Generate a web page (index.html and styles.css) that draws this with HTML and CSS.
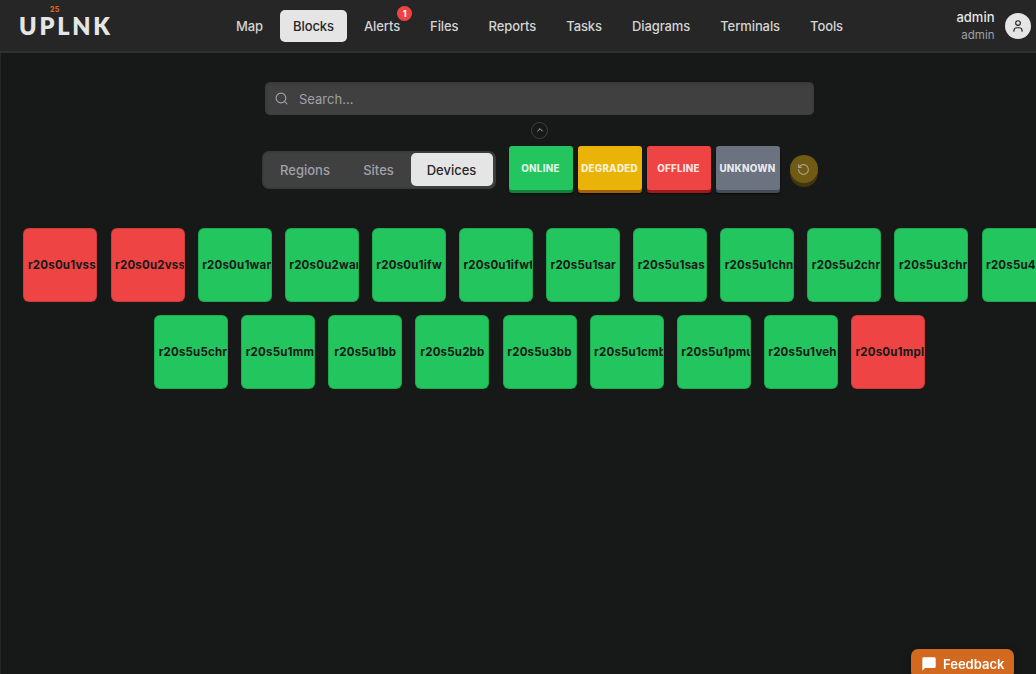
FILE: index.html
```html
<!DOCTYPE html>
<html lang="en">
<head>
    <meta charset="UTF-8">
    <meta name="viewport" content="width=device-width, initial-scale=1.0">
    <title>UPLNK - Blocks</title>
    <link rel="stylesheet" href="styles.css">
</head>
<body>

    <header class="topbar">
        <div class="logo">UPLNK<span class="logo-version">25</span></div>
        <nav class="nav">
            <a class="nav-link">Map</a>
            <a class="nav-link active">Blocks</a>
            <a class="nav-link">Alerts<span class="alert-count">1</span></a>
            <a class="nav-link">Files</a>
            <a class="nav-link">Reports</a>
            <a class="nav-link">Tasks</a>
            <a class="nav-link">Diagrams</a>
            <a class="nav-link">Terminals</a>
            <a class="nav-link">Tools</a>
        </nav>
        <div class="user">
            <div class="user-text">
                <div class="user-name">admin</div>
                <div class="user-role">admin</div>
            </div>
            <div class="avatar">
                <svg width="14" height="14" viewBox="0 0 24 24" fill="none" stroke="#262626" stroke-width="2" stroke-linecap="round" stroke-linejoin="round">
                    <circle cx="12" cy="7" r="4"/>
                    <path d="M19 21v-1a5 5 0 0 0-5-5h-4a5 5 0 0 0-5 5v1"/>
                </svg>
            </div>
        </div>
    </header>

    <main class="content">
        <div class="search">
            <svg width="13" height="13" viewBox="0 0 24 24" fill="none" stroke="#a1a1aa" stroke-width="2" stroke-linecap="round">
                <circle cx="11" cy="11" r="9"/>
                <path d="M22 22l-4.5-4.5"/>
            </svg>
            <span>Search...</span>
        </div>

        <div class="collapse">
            <svg width="8" height="8" viewBox="0 0 24 24" fill="none" stroke="#b4b4b4" stroke-width="3" stroke-linecap="round" stroke-linejoin="round">
                <path d="M5 15l7-7 7 7"/>
            </svg>
        </div>

        <div class="filters">
            <div class="tabs">
                <div class="tab regions">Regions</div>
                <div class="tab sites">Sites</div>
                <div class="tab devices active">Devices</div>
            </div>
            <div class="statuses">
                <div class="status online">ONLINE</div>
                <div class="status degraded">DEGRADED</div>
                <div class="status offline">OFFLINE</div>
                <div class="status unknown">UNKNOWN</div>
            </div>
            <div class="reset">
                <svg width="13" height="13" viewBox="0 0 24 24" fill="none" stroke="#aaa38e" stroke-width="2" stroke-linecap="round" stroke-linejoin="round">
                    <path d="M3 12a9 9 0 1 0 9-9 9.75 9.75 0 0 0-6.74 2.74L3 8"/>
                    <path d="M3 3v5h5"/>
                </svg>
            </div>
        </div>

        <div class="blocks">
            <div class="block-row">
                <div class="block down"><span>r20s0u1vss</span></div>
                <div class="block down"><span>r20s0u2vss</span></div>
                <div class="block"><span>r20s0u1wan</span></div>
                <div class="block"><span>r20s0u2wan</span></div>
                <div class="block"><span>r20s0u1ifw</span></div>
                <div class="block"><span>r20s0u1ifwt</span></div>
                <div class="block"><span>r20s5u1sar</span></div>
                <div class="block"><span>r20s5u1sas</span></div>
                <div class="block"><span>r20s5u1chn</span></div>
                <div class="block"><span>r20s5u2chr</span></div>
                <div class="block"><span>r20s5u3chr</span></div>
                <div class="block"><span>r20s5u4chr</span></div>
            </div>
            <div class="block-row">
                <div class="block"><span>r20s5u5chr</span></div>
                <div class="block"><span>r20s5u1mm</span></div>
                <div class="block"><span>r20s5u1bb</span></div>
                <div class="block"><span>r20s5u2bb</span></div>
                <div class="block"><span>r20s5u3bb</span></div>
                <div class="block"><span>r20s5u1cmb</span></div>
                <div class="block"><span>r20s5u1pmu</span></div>
                <div class="block"><span>r20s5u1veh</span></div>
                <div class="block down"><span>r20s0u1mpl</span></div>
            </div>
        </div>
    </main>

    <div class="feedback">
        <svg width="16" height="16" viewBox="0 0 24 24" fill="#fff">
            <path d="M20 2H4a2 2 0 0 0-2 2v18l4-4h14a2 2 0 0 0 2-2V4a2 2 0 0 0-2-2z"/>
        </svg>
        <span>Feedback</span>
    </div>

</body>
</html>
```

FILE: styles.css
```css
* {
    box-sizing: border-box;
}

body {
    margin: 0;
    height: 674px;
    overflow: hidden;
    background-color: #171918;
    font-family: Inter, sans-serif;
    box-shadow: inset 1px 0 0 #242625;
}

/* Top bar */
.topbar {
    display: flex;
    height: 53px;
    padding-left: 19px;
    background: #262626;
    border-bottom: 2px solid #303030;
}

.logo {
    position: relative;
    width: 204px;
    padding-top: 15px;
    font-family: Lato, sans-serif;
    font-size: 23.5px;
    font-weight: 800;
    line-height: 22px;
    letter-spacing: 2.8px;
    color: #e5e5e5;
}

.logo-version {
    position: absolute;
    left: 31px;
    top: 5px;
    font-family: Inter, sans-serif;
    font-size: 7px;
    font-weight: 800;
    line-height: 9px;
    letter-spacing: 0.4px;
    color: #d2691e;
}

.nav {
    display: flex;
    gap: 4px;
    padding-top: 10px;
}

.nav-link {
    position: relative;
    height: 32px;
    padding: 0 13px;
    border-radius: 5px;
    font-size: 13px;
    font-weight: 500;
    line-height: 32px;
    letter-spacing: -0.09px;
    color: #d4d4d4;
}

.nav-link.active {
    background: #e5e5e5;
    color: #262626;
}

.alert-count {
    position: absolute;
    top: -4px;
    right: 1px;
    width: 15px;
    height: 15px;
    border-radius: 50%;
    background: #ef4444;
    color: #fff;
    font-size: 9px;
    font-weight: 700;
    line-height: 15px;
    text-align: center;
}

.user {
    display: flex;
    gap: 10px;
    margin-left: auto;
    padding: 9px 5.5px 0 0;
}

.user-text {
    text-align: right;
}

.user-name {
    font-size: 13px;
    font-weight: 500;
    line-height: 17px;
    color: #e5e5e5;
}

.user-role {
    font-size: 11.5px;
    line-height: 19px;
    color: #a1a1a1;
}

.avatar {
    display: flex;
    align-items: center;
    justify-content: center;
    width: 26px;
    height: 26px;
    margin-top: 4px;
    border-radius: 50%;
    background: #e5e5e5;
}

/* Page content */
.content {
    display: flex;
    flex-direction: column;
    align-items: center;
    width: 1079px;
    padding-top: 29px;
}

.search {
    display: flex;
    align-items: center;
    gap: 11px;
    width: 549px;
    height: 33px;
    padding-left: 10px;
    border-radius: 5px;
    background: #404040;
    box-shadow: inset 0 1px 3px rgba(0, 0, 0, 0.2);
    font-size: 13px;
    color: #a1a1aa;
}

.collapse {
    display: flex;
    align-items: center;
    justify-content: center;
    width: 17px;
    height: 17px;
    margin-top: 6.5px;
    border: 1px solid #404040;
    border-radius: 50%;
}

.filters {
    display: flex;
    margin-top: 7.5px;
}

.tabs {
    display: flex;
    width: 234px;
    height: 38px;
    margin-top: 5px;
    padding: 2px;
    border-radius: 7px;
    background: #404040;
    box-shadow: inset 0 0 3px rgba(0, 0, 0, 0.35);
}

.tab {
    height: 33px;
    border-radius: 5px;
    font-size: 13px;
    font-weight: 500;
    line-height: 34px;
    text-align: center;
    color: #a1a1aa;
}

.tab.regions {
    width: 83px;
}

.tab.sites {
    width: 64px;
}

.tab.devices {
    width: 82px;
}

.tab.active {
    background: #e5e5e5;
    color: #262626;
}

.statuses {
    display: flex;
    gap: 5px;
    margin-left: 13px;
}

.status {
    width: 64px;
    height: 43.5px;
    border-radius: 3px;
    font-size: 9.8px;
    font-weight: 800;
    line-height: 45px;
    letter-spacing: 0.25px;
    text-align: center;
    color: rgba(255, 255, 255, 0.85);
    white-space: nowrap;
}

.online {
    background: #22c55e;
    box-shadow: 0 3px 0 #15803d, 0 4px 2px rgba(0, 0, 0, 0.7);
}

.degraded {
    background: #eab308;
    box-shadow: 0 3px 0 #a16207, 0 4px 2px rgba(0, 0, 0, 0.7);
}

.offline {
    background: #ef4444;
    box-shadow: 0 3px 0 #991b1b, 0 4px 2px rgba(0, 0, 0, 0.7);
}

.unknown {
    background: #6b7280;
    box-shadow: 0 3px 0 #454b57, 0 4px 2px rgba(0, 0, 0, 0.7);
}

.reset {
    display: flex;
    align-items: center;
    justify-content: center;
    width: 28px;
    height: 28px;
    margin: 9px 0 0 10px;
    border-radius: 50%;
    background: #715b14;
    box-shadow: 0 4px 0 #423610;
}

/* Device blocks */
.blocks {
    display: flex;
    flex-direction: column;
    align-items: center;
    gap: 13.1px;
    margin-top: 38.5px;
}

.block-row {
    display: flex;
    gap: 13.1px;
}

.block {
    display: flex;
    align-items: center;
    width: 74px;
    height: 74px;
    padding: 0 3.5px;
    border: 1px solid rgba(0, 0, 0, 0.13);
    border-radius: 6px;
    overflow: hidden;
    background: #22c55e;
    color: #171918;
    font-size: 11.5px;
    font-weight: 700;
    letter-spacing: 0.2px;
}

.block span {
    width: 100%;
    text-align: center;
    white-space: nowrap;
}

.block.down {
    background: #ef4444;
}

/* Sits on the bottom edge of the window */
.feedback {
    position: fixed;
    right: 22px;
    bottom: -5px;
    display: flex;
    align-items: center;
    gap: 6px;
    width: 103px;
    height: 30px;
    padding-left: 10px;
    border-radius: 7px;
    background: #d2691e;
    box-shadow: 0 2px 8px rgba(0, 0, 0, 0.3);
    color: #fff;
    font-size: 13px;
    font-weight: 600;
}
```
